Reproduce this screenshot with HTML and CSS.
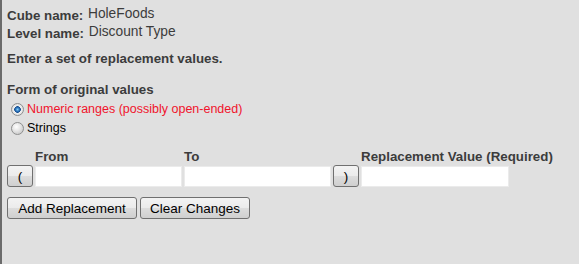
FILE: index.html
```html
<!DOCTYPE html>
<html lang="en">
  <head>
    <meta charset="UTF-8" />
    <title>Replacement values</title>
    <link rel="stylesheet" href="styles.css">
  </head>
  <body>
    <div class="page">
      <div class="info">
        <div class="info_row">
          <span class="lbl">Cube name:</span>
          <span class="val">HoleFoods</span>
        </div>
        <div class="info_row">
          <span class="lbl">Level name:</span>
          <span class="val">Discount Type</span>
        </div>
      </div>
      <p class="intro">Enter a set of replacement values.</p>
      <p class="form_title">Form of original values</p>
      <div class="radios">
        <label class="radio red">
          <input type="radio" name="form" checked />
          Numeric ranges (possibly open-ended)
        </label>
        <label class="radio">
          <input type="radio" name="form" />
          Strings
        </label>
      </div>
      <div class="ranges">
        <span class="head col_from">From</span>
        <span class="head col_to">To</span>
        <span class="head col_rep">Replacement Value (Required)</span>
        <button class="paren">(</button>
        <input type="text" class="inp" />
        <input type="text" class="inp" />
        <button class="paren">)</button>
        <input type="text" class="inp" />
      </div>
      <div class="actions">
        <button class="btn add">Add Replacement</button>
        <button class="btn">Clear Changes</button>
      </div>
    </div>
  </body>
</html>
```

FILE: styles.css
```css
* {
  box-sizing: border-box;
  margin: 0;
  padding: 0;
}
html,
body {
  background-color: #e0e0e0;
}
body {
  font-family: "Liberation Sans", Arial, sans-serif;
  font-size: 13.33px;
  color: #3c3c3c;
}
.page {
  min-height: 100vh;
  border-left: 2px solid #6b6b6b;
  padding: 5px 0 0 5px;
}
.info_row {
  line-height: 18px;
  height: 18px;
  white-space: nowrap;
}
.lbl {
  font-weight: bold;
}
.val {
  font-size: 13.75px;
  vertical-align: 2px;
  margin-left: 1px;
}
.intro {
  font-weight: bold;
  line-height: 18px;
  margin-top: 9px;
}
.form_title {
  font-weight: bold;
  line-height: 18px;
  margin-top: 13px;
}
.radios {
  margin-top: 1px;
}
.radio {
  display: flex;
  align-items: center;
  height: 19px;
  line-height: 19px;
  font-size: 12.5px;
  color: #000;
}
.radio.red {
  color: #f0142c;
}
.radio input {
  appearance: none;
  -webkit-appearance: none;
  width: 13px;
  height: 13px;
  margin: 0 3px 0 4px;
  border: 1px solid #8e8f8f;
  border-radius: 50%;
  background: radial-gradient(circle at 40% 35%, #ffffff 0, #e6e6e6 4px, #cfcfcf 7px);
}
.radio input:checked {
  background: radial-gradient(circle at 50% 50%, #7fd0f7 0, #2a6fb8 2px, #174f8e 3px, #f0f0f0 3.6px, #d4d4d4 7px);
}
.ranges {
  display: grid;
  grid-template-columns: 26px 147px 147px 26px 148px;
  column-gap: 2px;
  align-items: center;
  margin-top: 12px;
}
.head {
  font-weight: bold;
  line-height: 14px;
  white-space: nowrap;
}
.col_from {
  grid-column: 2;
}
.col_to {
  grid-column: 3;
}
.col_rep {
  grid-column: 5;
}
.inp {
  height: 21px;
  border: 1px solid #ebebeb;
  background-color: #fff;
  font-family: "Liberation Sans", Arial, sans-serif;
  font-size: 13px;
  margin-top: 1px;
}
.paren,
.btn {
  font-family: "Liberation Sans", Arial, sans-serif;
  font-size: 13.5px;
  color: #000;
  border: 1px solid #707070;
  border-radius: 3px;
  background: linear-gradient(#f3f3f3 0%, #ebebeb 50%, #dddddd 51%, #cfcfcf 100%);
}
.paren {
  height: 22px;
  margin-top: 1px;
}
.actions {
  display: flex;
  gap: 3px;
  margin-top: 10px;
}
.btn {
  height: 22px;
  padding: 0 9px;
}
.btn.add {
  width: 130px;
}
```
